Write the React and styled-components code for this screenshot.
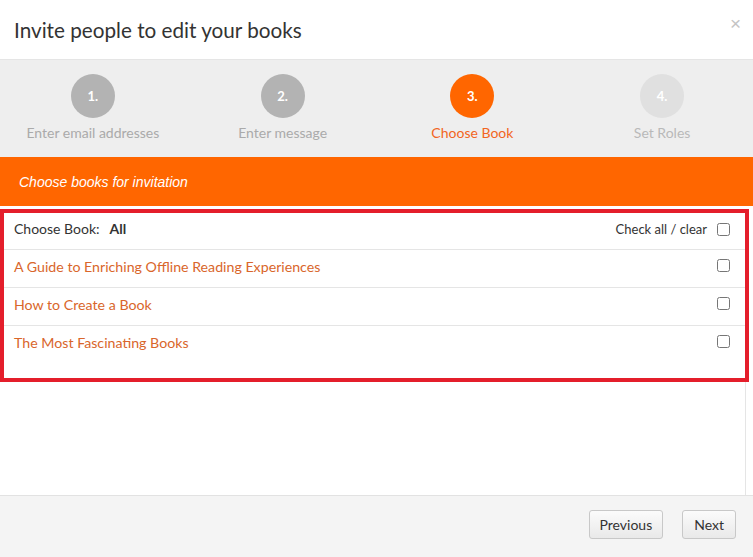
import styled, { createGlobalStyle } from "styled-components"

const GlobalStyle = createGlobalStyle`
    html, body {
        margin: 0;
        padding: 0;
        background: #fff;
    }
    body {
        font-family: Lato, "Open Sans", sans-serif;
        color: #333;
    }
`

const Modal = styled.div`
    display: flex;
    flex-direction: column;
    width: 753px;
    height: 557px;
    overflow: hidden;
    background: #fff;
`

const Header = styled.div`
    display: flex;
    align-items: center;
    justify-content: space-between;
    height: 59px;
    padding: 0 12px 0 14px;
    border-bottom: 1px solid #e5e5e5;
`

const Title = styled.h1`
    margin: 0;
    font-size: 20.7px;
    font-weight: 400;
    color: #333;
    line-height: 24px;
`

const Close = styled.span`
    font-family: "Liberation Sans", Arial, sans-serif;
    font-size: 19px;
    line-height: 20px;
    color: #c4c4c4;
    margin-top: -12px;
`

const Steps = styled.div`
    display: grid;
    grid-template-columns: repeat(4, 1fr);
    background: #eeeeee;
    padding: 14px 0;
    margin: 0 -4px 0 -2px;
`

const Step = styled.div`
    display: flex;
    flex-direction: column;
    align-items: center;
`

const Circle = styled.div`
    width: 44px;
    height: 44px;
    border-radius: 50%;
    background: ${p => p.$bg};
    color: #fff;
    font-size: 13px;
    font-weight: 700;
    display: flex;
    align-items: center;
    justify-content: center;
`

const StepLabel = styled.div`
    margin-top: 5px;
    font-size: 14px;
    line-height: 20px;
    color: ${p => p.$color};
`

const Banner = styled.div`
    display: flex;
    align-items: center;
    height: 49px;
    padding: 0 19px;
    background: #ff6600;
    color: #fff;
    font-family: "Liberation Sans", Arial, sans-serif;
    font-style: italic;
    font-size: 14px;
`

const Body = styled.div`
    flex: 1;
    display: flex;
    flex-direction: column;
    padding-top: 3px;
`

const BookBox = styled.div`
    margin-right: 4px;
    border: 4px solid #e41e2b;
    padding-bottom: 15px;
`

const Row = styled.div`
    display: flex;
    align-items: center;
    justify-content: space-between;
    padding: ${p => (p.$head ? "6px 15px 10px 10px" : "7px 15px 10px 10px")};
    line-height: 20px;
    font-size: 14px;
    border-bottom: ${p => (p.$last ? "none" : "1px solid #e5e5e5")};
`

const Label = styled.span`
    color: #333;
`

const Strong = styled.b`
    margin-left: 10px;
    font-weight: 700;
`

const CheckAll = styled.label`
    display: flex;
    align-items: center;
    gap: 10px;
    font-size: 13px;
    color: #333;
`

const BookLink = styled.a`
    color: #d9662b;
    text-decoration: none;
    font-size: 14.2px;
`

const Box = styled.input.attrs({ type: "checkbox" })`
    width: 13px;
    height: 13px;
    margin: ${p => (p.$up ? "-3px 0 0 0" : "0")};
`

const Filler = styled.div`
    flex: 1;
    margin-right: 7px;
    border-right: 1px solid #e5e5e5;
`

const Footer = styled.div`
    display: flex;
    justify-content: flex-end;
    align-items: center;
    gap: 19px;
    height: 62px;
    padding: 0 17px 4px 0;
    box-sizing: border-box;
    border-top: 1px solid #e2e2e2;
    background: #f4f4f4;
`

const Button = styled.button`
    height: 29px;
    padding: 0 ${p => p.$px}px;
    font-family: Lato, sans-serif;
    font-size: 14px;
    color: #333;
    border: 1px solid #c8c8c8;
    border-radius: 3px;
    background: linear-gradient(#fbfbfb, #e9e9e9);
    cursor: pointer;
`

const steps = [
    { n: "1.", label: "Enter email addresses", bg: "#b3b3b3", color: "#aaaaaa" },
    { n: "2.", label: "Enter message", bg: "#b3b3b3", color: "#aaaaaa" },
    { n: "3.", label: "Choose Book", bg: "#ff6600", color: "#f26522" },
    { n: "4.", label: "Set Roles", bg: "#e0e0e0", color: "#b9b9b9" },
]

const books = [
    "A Guide to Enriching Offline Reading Experiences",
    "How to Create a Book",
    "The Most Fascinating Books",
]

const App = () => {
    return (
        <Modal>
            <GlobalStyle />
            <Header>
                <Title>Invite people to edit your books</Title>
                <Close>×</Close>
            </Header>
            <Steps>
                {steps.map(s => (
                    <Step key={s.n}>
                        <Circle $bg={s.bg}>{s.n}</Circle>
                        <StepLabel $color={s.color}>{s.label}</StepLabel>
                    </Step>
                ))}
            </Steps>
            <Banner>Choose books for invitation</Banner>
            <Body>
                <BookBox>
                    <Row $head>
                        <Label>Choose Book:<Strong>All</Strong></Label>
                        <CheckAll>Check all / clear <Box /></CheckAll>
                    </Row>
                    {books.map((b, i) => (
                        <Row key={b} $last={i === books.length - 1}>
                            <BookLink href="#">{b}</BookLink>
                            <Box $up />
                        </Row>
                    ))}
                </BookBox>
                <Filler />
            </Body>
            <Footer>
                <Button $px={10}>Previous</Button>
                <Button $px={11}>Next</Button>
            </Footer>
        </Modal>
    )
}

export default App
